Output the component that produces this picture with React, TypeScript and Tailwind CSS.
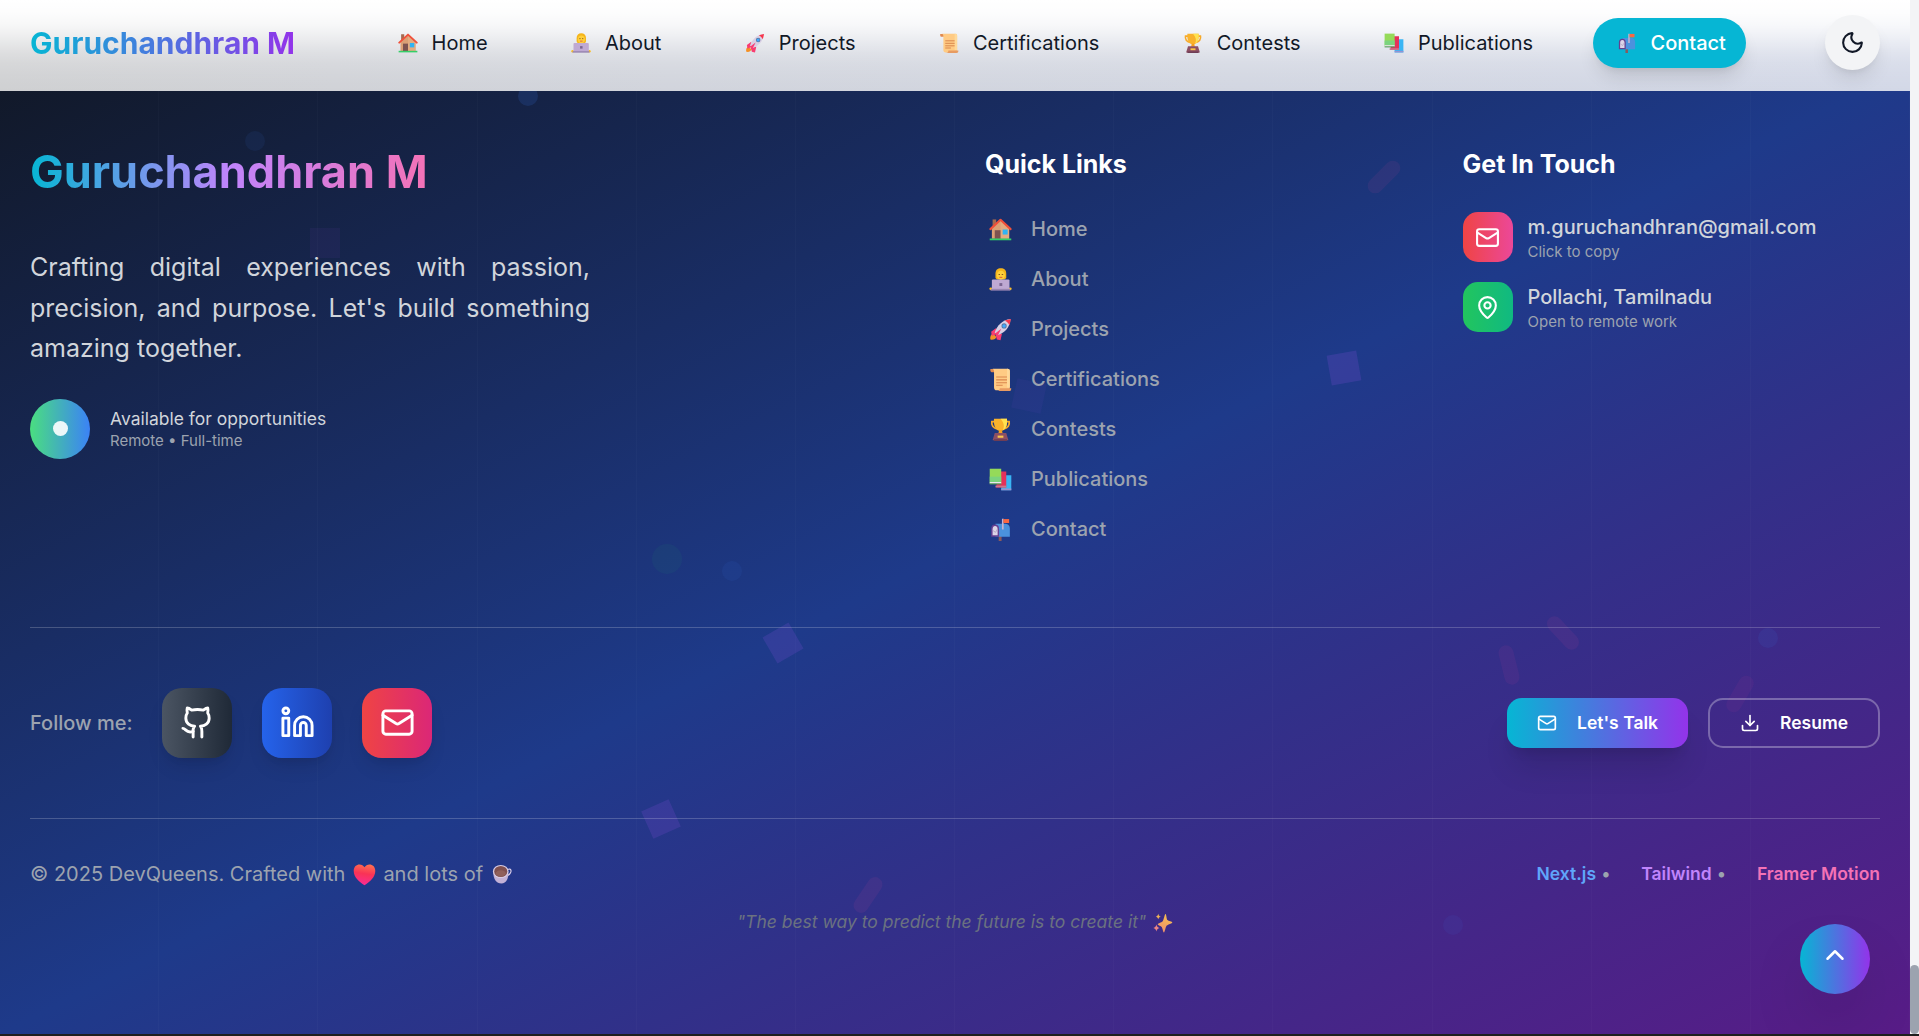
import type { ReactNode } from "react";
import { ChevronUp, Download, Github, Linkedin, Mail, MapPin, Moon } from "lucide-react";

type EmojiName =
  | "house"
  | "person"
  | "rocket"
  | "scroll"
  | "trophy"
  | "books"
  | "mailbox"
  | "heart"
  | "coffee"
  | "sparkles";

const emojiArt: Record<EmojiName, ReactNode> = {
  house: (
    <>
      <path d="M5 2h5v10H5z" fill="#a5694f" />
      <path d="M4 14 16 3l12 11v15H4z" fill="#dba075" />
      <path d="M16 3 28 14v15H16z" fill="#e3ac80" />
      <path d="M2 15.500 16 2.500l14 13" fill="none" stroke="#f0503a" strokeWidth="3" strokeLinecap="round" strokeLinejoin="round" />
      <path d="M8 17h8v12H8z" fill="#7d5350" />
      <path d="M19 16h7v7h-7z" fill="#2fb4f5" />
      <path d="M1 28.500h30V31H1z" fill="#35cf68" />
    </>
  ),
  person: (
    <>
      <path d="M9 8c0-5 3-7.500 7.500-7.500S24 3 24 8v5c0 2-2 3-3 3h-9c-1 0-3-1-3-3z" fill="#f5b51b" />
      <ellipse cx="16.500" cy="10" rx="5.600" ry="6.200" fill="#ffcf3a" />
      <path d="M13.300 9h2M17.700 9h2" stroke="#8a5a1c" strokeWidth="1.400" />
      <path d="M14.500 13h4" stroke="#e0533d" strokeWidth="1.300" />
      <circle cx="2.500" cy="29" r="2" fill="#fbbf24" />
      <circle cx="29.500" cy="29" r="2" fill="#fbbf24" />
      <rect x="4" y="16" width="24.500" height="14" rx="1.500" fill="#bfa9d3" />
      <path d="M2.500 29h27v2.500h-27z" fill="#9a86b2" />
      <path d="M14.500 21h4v4h-4z" fill="#7a6591" />
    </>
  ),
  rocket: (
    <>
      <path d="M2 30c-1-4 1-8 4-8l4 4c0 3-4 5-8 4z" fill="#f59023" />
      <path d="M10 14 3 19l1 6 7-3zM18 22l-2 9-5-1-2-7z" fill="#f83d72" />
      <path d="M8 20C11 11 18 3 30 1.500 29 14 21 21 12 24z" fill="#d9cfe4" />
      <path d="M22 3.500 30.500 1.500 28.500 10C27 7 25 5 22 3.500z" fill="#f8354b" />
      <path d="m8 22 9-7-5 10z" fill="#f83d72" />
      <circle cx="21" cy="11" r="3.600" fill="#5d779e" />
      <circle cx="21" cy="11" r="2.400" fill="#3fa9ff" />
    </>
  ),
  scroll: (
    <>
      <path d="M2 1.500h7V6H3.500C2 6 1.500 2.500 2 1.500z" fill="#e08a50" />
      <path d="M5 1h21c2 0 3 1 3 3v23c0 3-2 4-5 4H11c-3 0-4-2-4-4V5C7 3 6.500 2 5 1z" fill="#ffcb84" />
      <path d="M25 1c3 0 4 1 4 4v22h-4z" fill="#ffd999" />
      <path d="M10 12.500h15M10 16.500h15M10 20.500h15M10 24h9" stroke="#d9874e" strokeWidth="1.600" />
      <path d="M15 28h16c0 3-1 4-3 4H11c3 0 4-2 4-4z" fill="#e79b62" />
    </>
  ),
  trophy: (
    <>
      <path d="M8 5H4c-1 5 2 9 7 10M24 5h4c1 5-2 9-7 10" fill="none" stroke="#f7a928" strokeWidth="2.500" />
      <path d="M7 1h18c1 9-2 17-9 17S6 10 7 1z" fill="#f9b22c" />
      <path d="M16 1h9c1 9-2 15-6 16 3-5 2-10-3-16z" fill="#ffe250" />
      <path d="M14 17h4l1 5h-6z" fill="#f5a020" />
      <path d="M8 21h16l3 10H5z" fill="#8d4f63" />
      <path d="M7 29.500h18V32H7z" fill="#6f3d55" />
      <path d="M12 24.500h8v3h-8z" fill="#fbc54a" />
    </>
  ),
  books: (
    <>
      <path d="M20 10h11v21H17V19z" fill="#39b5f4" />
      <path d="M17 28.500h14V31H17z" fill="#9792d1" />
      <path d="M13 5h11v22H10z" fill="#e4315b" />
      <path d="M9 24.500h15V27H9z" fill="#c9798f" />
      <path d="M1 1h16v21H1z" fill="#95da59" />
      <path d="M1 12h16v8H1z" fill="#7bd37e" />
      <path d="M1 19.500h16v2H1z" fill="#eae6f0" />
      <path d="M1 21.500h16V23H1z" fill="#4b8b5e" />
    </>
  ),
  mailbox: (
    <>
      <path d="M13.500 25h4v7h-4z" fill="#8b5a5c" />
      <path d="M9 8h14c4 0 6 3 6 7v11H9z" fill="#4b92dd" />
      <path d="M3 15c0-4 2-6 5.500-6S14 11 14 15v11H3z" fill="#663f91" />
      <path d="M5 16c0-3 1-5 3.500-5S12 13 12 16v8H5z" fill="#dcd4e8" />
      <path d="m5 17 4 3 3-5" fill="none" stroke="#a89abc" strokeWidth="1" />
      <path d="M18 1h2.400v15H18z" fill="#c3b4d2" />
      <path d="M20 1.500h8v5.500h-8z" fill="#fa6842" />
    </>
  ),
  heart: (
    <>
      <defs>
        <linearGradient id="heart-fill" x1="0.6" y1="0" x2="0.45" y2="1">
          <stop offset="0" stopColor="#ff6f4f" />
          <stop offset="0.45" stopColor="#f93356" />
          <stop offset="1" stopColor="#fb2c96" />
        </linearGradient>
      </defs>
      <path d="M16 31C9 26 1 20 1 11 1 5 5 2 9 2c3 0 5.500 1.500 7 4 1.500-2.500 4-4 7-4 4 0 8 3 8 9 0 9-8 15-15 20z" fill="url(#heart-fill)" />
    </>
  ),
  coffee: (
    <>
      <path d="M25 9c5-3 7 2 4 6-1 2-3 3-5 4" fill="none" stroke="#ddd0e9" strokeWidth="1.800" />
      <path d="M2 12h24c1 11-3 19-11 19S2 25 2 12z" fill="#c3b1d6" />
      <ellipse cx="14" cy="12" rx="12.500" ry="10.500" fill="#d9cce4" />
      <ellipse cx="14" cy="12" rx="10.500" ry="8.800" fill="#80504f" />
      <ellipse cx="14" cy="15" rx="8" ry="5" fill="#90605b" />
    </>
  ),
  sparkles: (
    <>
      <defs>
        <linearGradient id="sparkle-fill" x1="0.7" y1="0" x2="0.3" y2="1">
          <stop offset="0" stopColor="#f6c14f" />
          <stop offset="1" stopColor="#ee8f6c" />
        </linearGradient>
      </defs>
      <path d="M20 1.500c1.500 0 1.500 8 3 9.500s8 2.500 8 4-7 3-9 5-3 11-4.500 11-2-7-4-9-6-2.500-6-4 6-3 8-5 3-11.500 4.500-11.500z" fill="url(#sparkle-fill)" />
      <path d="M8.500 1c.8 3 1.500 4 4 4.500-2.500.8-3.200 1.500-4 4.500-1-3-1.800-3.700-4-4.500 2.200-.5 3-1.500 4-4.500z" fill="#ecb158" />
      <path d="M5.500 18.500c.8 3.500 2 4.700 5 5.500-3 1-4.200 2-5 5.500-1-3.500-2-4.500-5-5.500 3-.8 4-2 5-5.500z" fill="#ea8584" />
    </>
  ),
};

function Emoji({ name, className }: { name: EmojiName; className: string }) {
  return (
    <svg viewBox="0 0 32 32" className={className} aria-hidden="true">
      {emojiArt[name]}
    </svg>
  );
}

const links: { label: string; icon: EmojiName }[] = [
  { label: "Home", icon: "house" },
  { label: "About", icon: "person" },
  { label: "Projects", icon: "rocket" },
  { label: "Certifications", icon: "scroll" },
  { label: "Contests", icon: "trophy" },
  { label: "Publications", icon: "books" },
  { label: "Contact", icon: "mailbox" },
];

const shapeKinds = {
  dot: "w-5 h-5 rounded-full bg-[#3b82f6]",
  ball: "w-[30px] h-[30px] rounded-full bg-[#22c55e]",
  square: "w-[30px] h-[30px] bg-[#a855f7]",
  pill: "w-[15px] h-10 rounded-full bg-[#ec4899]",
};

type Shape = { kind: keyof typeof shapeKinds; x: number; y: number; r?: number; o: number };

/* Centre points, relative to the footer's top left corner. */
const shapes: Shape[] = [
  { kind: "dot", x: 527.5, y: 28.5, o: 0.15 },
  { kind: "dot", x: 255, y: 74, o: 0.08 },
  { kind: "square", x: 325, y: 175.5, o: 0.06 },
  { kind: "pill", x: 1384, y: 110, r: 45, o: 0.08 },
  { kind: "square", x: 1344, y: 301, r: -10, o: 0.16 },
  { kind: "square", x: 1029, y: 329, r: 12, o: 0.05 },
  { kind: "ball", x: 667, y: 491.5, o: 0.06 },
  { kind: "dot", x: 732, y: 503.5, o: 0.08 },
  { kind: "square", x: 782.5, y: 576, r: 60, o: 0.15 },
  { kind: "square", x: 660.5, y: 752, r: 66, o: 0.15 },
  { kind: "pill", x: 868, y: 827.5, r: 34, o: 0.08 },
  { kind: "pill", x: 1563, y: 566, r: -43, o: 0.08 },
  { kind: "pill", x: 1508.5, y: 598, r: -14, o: 0.07 },
  { kind: "pill", x: 1740, y: 626.5, r: 30, o: 0.06 },
  { kind: "dot", x: 1768, y: 571, o: 0.09 },
  { kind: "dot", x: 1453, y: 858, o: 0.07 },
];

function Backdrop() {
  return (
    <div className="absolute inset-0 overflow-hidden">
      <div className="grid h-full grid-cols-12">
        {Array.from({ length: 12 }, (_, i) => (
          <div key={i} className="border-r border-white/[0.018]" />
        ))}
      </div>
      {shapes.map((s, i) => (
        <span
          key={i}
          className={"absolute -translate-x-1/2 -translate-y-1/2 " + shapeKinds[s.kind]}
          style={{ left: s.x, top: s.y, rotate: `${s.r ?? 0}deg`, opacity: s.o, transformOrigin: "center" }}
        />
      ))}
    </div>
  );
}

function Header() {
  return (
    <header className="absolute inset-x-0 top-0 z-20 flex h-[91px] items-start justify-between bg-[linear-gradient(to_bottom,#fff_0px,rgba(255,255,255,0.95)_13px,rgba(255,255,255,0.83)_25px,rgba(255,255,255,0.68)_34px,rgba(255,255,255,0.48)_44px,rgba(255,255,255,0.3)_53px,rgba(255,255,255,0.16)_63px,rgba(255,255,255,0.07)_75px,transparent_91px),linear-gradient(to_right,#cfd0d2,#d1d4dc_35%,#d2d6e1_65%,#d3d8e7)] px-[30px] pt-[15px]">
      <div className="flex h-[55px] items-center">
        <span className="bg-linear-to-r/srgb from-[#06b6d4] to-[#9333ea] bg-clip-text text-[30px] leading-10 font-bold text-transparent">
          Guruchandhran M
        </span>
      </div>
      <nav className="flex h-[55px] items-center gap-10">
        {links.map((l) => (
          <a
            key={l.label}
            className={
              l.label === "Contact"
                ? "flex h-[50px] items-center gap-2.5 rounded-full bg-[#06b6d4] px-5 text-[20px] font-medium text-white shadow-[0_12px_19px_-4px_rgba(0,0,0,0.12),0_5px_8px_-5px_rgba(0,0,0,0.1)]"
                : "flex h-[50px] items-center gap-2.5 px-5 text-[20px] text-[#111827]"
            }
          >
            <span className="flex w-[27.4px] justify-center">
              <Emoji name={l.icon} className="size-5" />
            </span>
            {l.label}
          </a>
        ))}
      </nav>
      <button className="flex size-[55px] items-center justify-center rounded-full bg-[#f3f4f6] text-[#111827] shadow-[0_12px_19px_-4px_rgba(0,0,0,0.1),0_5px_8px_-5px_rgba(0,0,0,0.1)]">
        <Moon size={25} />
      </button>
    </header>
  );
}

function ContactRow({ icon, tint, title, note }: { icon: ReactNode; tint: string; title: string; note: string }) {
  return (
    <div className="flex items-center gap-[15px]">
      <div className={"flex size-[50px] items-center justify-center rounded-[15px] text-white " + tint}>{icon}</div>
      <div>
        <div className="text-[20px] leading-[30px] font-medium text-[#d1d5db]">{title}</div>
        <div className="text-[15px] leading-5 text-[#9ca3af]">{note}</div>
      </div>
    </div>
  );
}

function Social({ icon, tint }: { icon: ReactNode; tint: string }) {
  return (
    <a
      className={
        "flex size-[70px] items-center justify-center rounded-[20px] pb-px text-white shadow-[0_12px_19px_-4px_rgba(0,0,0,0.1),0_5px_8px_-5px_rgba(0,0,0,0.1)] " +
        tint
      }
    >
      {icon}
    </a>
  );
}

function Footer() {
  return (
    <footer className="relative h-[967px] bg-[linear-gradient(to_bottom_right,#111827,#1e3a8a,#581c87)] px-[30px] pt-20">
      <Backdrop />
      <div className="relative">
        <div className="grid h-[480px] grid-cols-4 gap-[60px]">
          <section className="col-span-2">
            <h2 className="w-fit bg-linear-to-r/srgb from-[#06b6d4] via-[#c084fc] to-[#f472b6] bg-clip-text text-[45px] leading-[50px] font-bold text-transparent">
              Guruchandhran M
            </h2>
            <p className="mt-[50px] max-w-[560px] text-justify text-[25px] leading-[40.6px] text-[#d1d5db]">
              Crafting digital experiences with passion, precision, and purpose. Let's build something amazing together.
            </p>
            <div className="mt-[30px] flex items-center gap-5">
              <div className="flex size-[60px] items-center justify-center rounded-full bg-linear-to-r/srgb from-[#4ade80] to-[#3b82f6]">
                <div className="size-[15px] rounded-full bg-white/90" />
              </div>
              <div>
                <div className="text-[17.5px] leading-[25px] text-[#d1d5db]">Available for opportunities</div>
                <div className="text-[15px] leading-5 text-[#9ca3af]">Remote • Full-time</div>
              </div>
            </div>
          </section>
          <section>
            <h3 className="text-[25px] leading-[35px] font-bold text-white">Quick Links</h3>
            <ul className="mt-[29px] flex flex-col gap-[15px]">
              {links.map((l) => (
                <li key={l.label} className="flex h-[35px] items-center gap-4 text-[20px] font-medium text-[#9ca3af]">
                  <span className="flex w-[30px] justify-center pt-0.5">
                    <Emoji name={l.icon} className="size-[23px]" />
                  </span>
                  {l.label}
                </li>
              ))}
            </ul>
          </section>
          <section>
            <h3 className="text-[25px] leading-[35px] font-bold text-white">Get In Touch</h3>
            <div className="mt-[30px] flex flex-col gap-5">
              <ContactRow
                icon={<Mail size={25} />}
                tint="bg-linear-to-r/srgb from-[#ef4444] to-[#ec4899]"
                title="m.guruchandhran@gmail.com"
                note="Click to copy"
              />
              <ContactRow
                icon={<MapPin size={25} />}
                tint="bg-linear-to-r/srgb from-[#22c55e] to-[#10b981]"
                title="Pollachi, Tamilnadu"
                note="Open to remote work"
              />
            </div>
          </section>
        </div>

        <div className="flex h-[191px] items-center justify-between border-t border-white/20">
          <div className="flex items-center gap-[30px]">
            <span className="text-[20px] font-medium text-[#9ca3af]">Follow me:</span>
            <Social icon={<Github size={35} />} tint="bg-linear-to-r/srgb from-[#4b5563] to-[#1f2937]" />
            <Social icon={<Linkedin size={35} />} tint="bg-linear-to-r/srgb from-[#2563eb] to-[#1e40af]" />
            <Social icon={<Mail size={35} />} tint="bg-linear-to-r/srgb from-[#ef4444] to-[#db2777]" />
          </div>
          <div className="flex gap-5 text-[17.5px] font-semibold text-white">
            <button className="flex h-[50px] items-center gap-5 rounded-[15px] bg-linear-to-r/srgb from-[#06b6d4] to-[#9333ea] px-[30px] shadow-[0_25px_31px_-6px_rgba(0,0,0,0.12),0_10px_12px_-7px_rgba(0,0,0,0.12)]">
              <Mail size={20} />
              Let's Talk
            </button>
            <button className="flex h-[50px] items-center gap-5 rounded-[15px] border-2 border-white/30 px-[30px]">
              <Download size={20} />
              Resume
            </button>
          </div>
        </div>

        <div className="border-t border-white/20 pt-10">
          <div className="flex h-[30px] items-center justify-between">
            <p className="flex items-center text-[20px] text-[#9ca3af]">
              © 2025 DevQueens. Crafted with
              <Emoji name="heart" className="mr-[7px] ml-2 size-[23px]" />
              and lots of
              <Emoji name="coffee" className="ml-[9px] size-5" />
            </p>
            <div className="flex gap-[31px] text-[17.5px] font-semibold text-[#9ca3af]">
              <span>
                <span className="mr-px text-[#60a5fa]">Next.js</span> •
              </span>
              <span>
                <span className="mr-px text-[#c084fc]">Tailwind</span> •
              </span>
              <span className="text-[#f472b6]">Framer Motion</span>
            </div>
          </div>
          <p className="mt-[21px] flex h-[25px] items-center justify-center gap-[7px] text-[17.5px] text-[#6b7280] italic">
            "The best way to predict the future is to create it"
            <Emoji name="sparkles" className="size-5" />
          </p>
        </div>
      </div>
    </footer>
  );
}

export default function App() {
  return (
    <div className="flex h-[1036px] w-[1919px] overflow-hidden bg-[#1f1f1f] font-['Inter',sans-serif]">
      <main className="relative w-[1910px] shrink-0">
        <div className="h-[67px] bg-white" />
        <Footer />
        <Header />
        <button className="absolute top-[924px] left-[1800px] z-10 flex size-[70px] items-center justify-center rounded-full bg-linear-to-r/srgb from-[#06b6d4] to-[#9333ea] pb-[9px] text-white shadow-[0_31px_62px_-15px_rgba(0,0,0,0.25)]">
          <ChevronUp size={30} />
        </button>
      </main>
      <div className="flex h-[1034px] w-[9px] flex-col justify-end bg-[#f3f4f6]">
        <div className="h-[69px] rounded-[5px] bg-[#9ca3af]" />
      </div>
    </div>
  );
}
